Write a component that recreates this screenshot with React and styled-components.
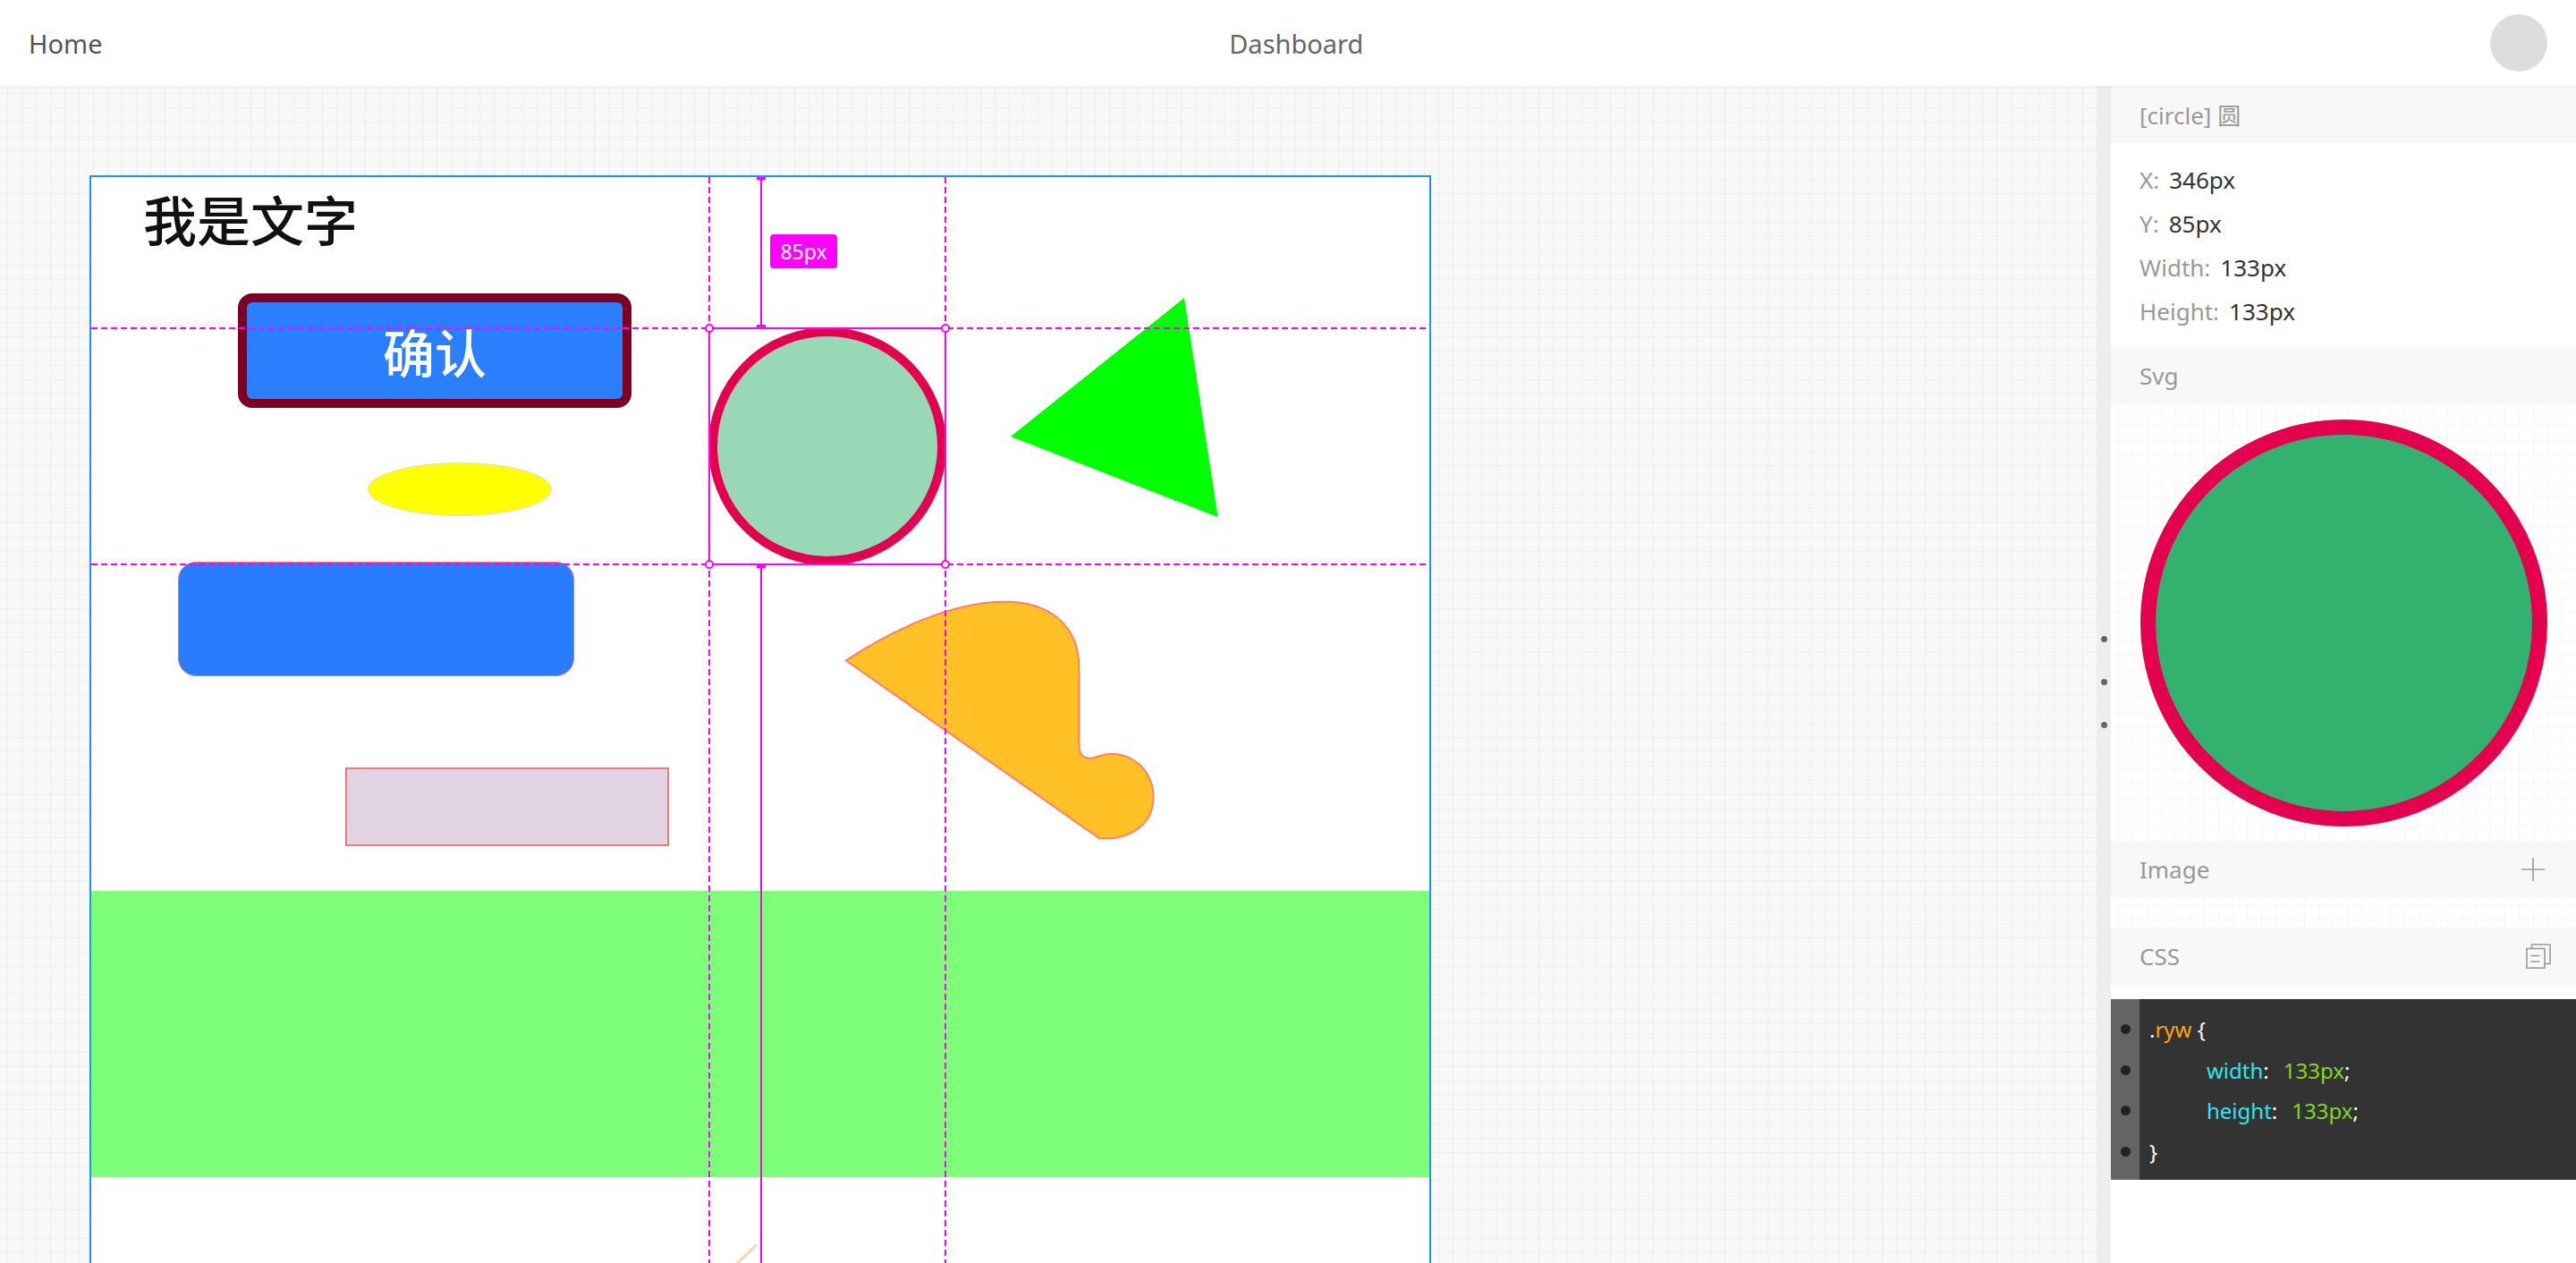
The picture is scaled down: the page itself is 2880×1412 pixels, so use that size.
import React from 'react';
import styled, { createGlobalStyle, css } from 'styled-components';

const GlobalStyle = createGlobalStyle`
  html, body {
    margin: 0;
    padding: 0;
  }

  body {
    font-family: "Noto Sans", "Noto Sans CJK SC", sans-serif;
    overflow: hidden;
  }
`;

const MAGENTA = '#ff00ff';

const gridBg = (base) => css`
  background-color: ${base};
  background-image:
    linear-gradient(to right, rgba(0, 0, 0, 0.03) 1px, transparent 1px),
    linear-gradient(to bottom, rgba(0, 0, 0, 0.03) 1px, transparent 1px);
  background-size: 16px 16px;
  background-position: 8px 8px;
`;

const Page = styled.div`
  width: 100vw;
  height: 100vh;
  display: flex;
  flex-direction: column;
  background: #fff;
`;

const TopBar = styled.header`
  height: 96px;
  flex: none;
  display: flex;
  align-items: center;
  justify-content: space-between;
  padding: 0 32px;
  background: #fff;
  box-shadow: 0 1px 4px rgba(0, 0, 0, 0.05);
  position: relative;
  z-index: 2;
`;

const NavText = styled.span`
  font-size: 29px;
  color: ${({ $muted }) => ($muted ? '#666' : '#555')};
`;

const Avatar = styled.div`
  width: 64px;
  height: 64px;
  border-radius: 50%;
  background: #ddd;
`;

const Workspace = styled.div`
  flex: 1;
  display: flex;
  min-height: 0;
`;

const Canvas = styled.main`
  flex: 1;
  overflow: hidden;
  padding: 100px 0 0 100px;
  ${gridBg('#f8f8f8')};
`;

const Artboard = styled.div`
  position: relative;
  box-sizing: border-box;
  width: 1500px;
  height: 1400px;
  background: #fff;
  border: 2px solid #1e90ff;
`;

/* shapes on the artboard */

const Title = styled.div`
  position: absolute;
  left: ${({ $x }) => $x}px;
  top: ${({ $y }) => $y}px;
  font-family: "Noto Sans CJK SC", sans-serif;
  font-size: 60px;
  line-height: 1;
  font-weight: 500;
  color: #111;
  white-space: nowrap;
`;

const ConfirmButton = styled.div`
  position: absolute;
  left: ${({ $x }) => $x}px;
  top: ${({ $y }) => $y}px;
  box-sizing: border-box;
  width: 440px;
  height: 128px;
  border: 10px solid #7d0024;
  border-radius: 16px;
  background: #2a7fff;
  color: #fff;
  display: flex;
  align-items: center;
  justify-content: center;
  font-family: "Noto Sans CJK SC", sans-serif;
  font-size: 58px;
  font-weight: 500;
`;

const Ellipse = styled.div`
  position: absolute;
  left: ${({ $x }) => $x}px;
  top: ${({ $y }) => $y}px;
  width: 206px;
  height: 60px;
  box-sizing: border-box;
  border-radius: 50%;
  background: #ffff00;
  border: 1px solid #ddd;
`;

const Block = styled.div`
  position: absolute;
  left: ${({ $x }) => $x}px;
  top: ${({ $y }) => $y}px;
  width: ${({ $w }) => $w}px;
  height: ${({ $h }) => $h}px;
  box-sizing: border-box;
  background: ${({ $fill }) => $fill};
  border: ${({ $line }) => $line};
  border-radius: ${({ $radius }) => $radius || 0}px;
`;

const Band = styled.div`
  position: absolute;
  left: 0;
  right: 0;
  top: ${({ $y }) => $y}px;
  height: 320px;
  background: #7dff7a;
`;

const ShapeSvg = styled.svg`
  position: absolute;
  left: ${({ $x }) => $x}px;
  top: ${({ $y }) => $y}px;
  overflow: visible;
  display: block;
`;

/* selection guides */

const GuideH = styled.div`
  position: absolute;
  left: 0;
  right: 0;
  top: ${({ $y }) => $y}px;
  height: 2px;
  background: repeating-linear-gradient(to right, ${MAGENTA} 0 7px, transparent 7px 11px);
`;

const GuideV = styled.div`
  position: absolute;
  top: 0;
  bottom: 0;
  left: ${({ $x }) => $x}px;
  width: 2px;
  background: repeating-linear-gradient(to bottom, ${MAGENTA} 0 7px, transparent 7px 11px);
`;

const MeasureLine = styled.div`
  position: absolute;
  left: ${({ $x }) => $x}px;
  top: ${({ $top }) => $top}px;
  height: ${({ $h }) => ($h ? `${$h}px` : 'auto')};
  bottom: ${({ $h }) => ($h ? 'auto' : '0')};
  width: 2px;
  background: ${MAGENTA};
`;

const Tick = styled.div`
  position: absolute;
  left: ${({ $x }) => $x - 4}px;
  top: ${({ $y }) => $y}px;
  width: 10px;
  height: 3px;
  background: ${MAGENTA};
`;

const SelectBox = styled.div`
  position: absolute;
  left: ${({ $x }) => $x}px;
  top: ${({ $y }) => $y}px;
  width: ${({ $size }) => $size}px;
  height: ${({ $size }) => $size}px;
  box-sizing: border-box;
  border: 2px solid ${MAGENTA};
`;

const Handle = styled.div`
  position: absolute;
  left: ${({ $x }) => $x - 5}px;
  top: ${({ $y }) => $y - 5}px;
  width: 10px;
  height: 10px;
  box-sizing: border-box;
  border-radius: 50%;
  border: 2px solid ${MAGENTA};
  background: #fff;
`;

const MeasureTag = styled.div`
  position: absolute;
  left: ${({ $x }) => $x}px;
  top: ${({ $y }) => $y}px;
  width: 75px;
  height: 38px;
  border-radius: 4px;
  background: ${MAGENTA};
  color: #fff;
  font-size: 23px;
  display: flex;
  align-items: center;
  justify-content: center;
`;

/* splitter */

const Splitter = styled.div`
  width: 16px;
  flex: none;
  background: #eee;
  display: flex;
  flex-direction: column;
  align-items: center;
  justify-content: center;
  gap: 41px;
  padding-top: 16px;
  box-sizing: border-box;
`;

const Grip = styled.span`
  width: 7px;
  height: 7px;
  border-radius: 50%;
  background: #666;
`;

/* inspector panel */

const Panel = styled.aside`
  width: 520px;
  flex: none;
  background: #fff;
  display: flex;
  flex-direction: column;
  overflow: hidden;
`;

const SectionHead = styled.div`
  height: 64px;
  flex: none;
  display: flex;
  align-items: center;
  justify-content: space-between;
  padding: 0 28px 0 32px;
  background: #f8f8f8;
  font-size: 26px;
  color: #999;
`;

const IconSlot = styled.span`
  display: flex;
  margin-right: ${({ $inset }) => $inset || 0}px;
`;

const InfoList = styled.div`
  padding: 16px 32px;
`;

const InfoRow = styled.div`
  height: 49px;
  display: flex;
  align-items: center;
  gap: 11px;
  font-size: 26px;
`;

const InfoLabel = styled.span`
  color: #999;
`;

const InfoValue = styled.span`
  color: #333;
`;

const Preview = styled.div`
  height: 488px;
  flex: none;
  display: flex;
  align-items: center;
  justify-content: center;
  ${gridBg('#fff')};
`;

const ImageArea = styled.div`
  height: 33px;
  flex: none;
  ${gridBg('#fff')};
`;

const CodeBlock = styled.div`
  margin-top: 16px;
  padding: 11px 0 9px;
  background: linear-gradient(to right, #646464 32px, #333 32px);
  font-size: 24px;
  color: #fff;
`;

const CodeLine = styled.div`
  height: 45.5px;
  display: flex;
  align-items: center;
`;

const GutterDot = styled.span`
  width: 32px;
  flex: none;
  display: flex;
  justify-content: center;

  &::before {
    content: '';
    width: 11px;
    height: 11px;
    border-radius: 50%;
    background: #222;
  }
`;

const CodeText = styled.span`
  padding-left: ${({ $indent }) => ($indent ? 75 : 11)}px;
  white-space: pre;
`;

const Token = styled.span`
  color: ${({ $kind }) =>
    ({ selector: '#ffa800', prop: '#2ee6f0', value: '#80d91c' }[$kind] || '#fff')};
  margin-left: ${({ $gap }) => $gap || 0}px;
`;

const CircleShape = ({ size, fillOpacity }) => (
  <svg width={size} height={size} viewBox="0 0 133 133">
    <circle cx="66.5" cy="66.5" r="64" fill="#33b16f" fillOpacity={fillOpacity} stroke="#e5004f" strokeWidth="5" />
  </svg>
);

const PlusIcon = () => (
  <svg width="26" height="26" viewBox="0 0 26 26">
    <path d="M13 0V26M0 13H26" stroke="#999" strokeWidth="1.6" fill="none" />
  </svg>
);

const CopyIcon = () => (
  <svg width="28" height="28" viewBox="0 0 28 28" fill="none" stroke="#999" strokeWidth="1.6">
    <path d="M6.5 5V1H27V22.5H21.5" />
    <rect x="1" y="5.5" width="20" height="21.7" />
    <path d="M5.5 13.5H15.5M5.5 20H15.5" />
  </svg>
);

const info = [
  ['X:', '346px'],
  ['Y:', '85px'],
  ['Width:', '133px'],
  ['Height:', '133px'],
];

const box = { x: 690, y: 168, size: 266 };

const App = () => (
  <Page>
    <GlobalStyle />
    <TopBar>
      <NavText>Home</NavText>
      <NavText $muted>Dashboard</NavText>
      <Avatar />
    </TopBar>

    <Workspace>
      <Canvas>
        <Artboard>
          <Title $x={58} $y={16}>我是文字</Title>
          <ConfirmButton $x={164} $y={130}>确认</ConfirmButton>
          <Ellipse $x={309} $y={319} />
          <Block $x={97} $y={430} $w={443} $h={128} $radius={20} $fill="#297cff" $line="1px solid #e87878" />
          <Block $x={284} $y={660} $w={362} $h={88} $fill="#e2d3e2" $line="2px solid #f47878" />

          <ShapeSvg $x={box.x} $y={box.y} width={box.size} height={box.size} viewBox="0 0 133 133">
            <circle cx="66.5" cy="66.5" r="64" fill="#33b16f" fillOpacity="0.5" stroke="#e5004f" strokeWidth="5" />
          </ShapeSvg>

          <ShapeSvg $x={1028} $y={135} width="232" height="245" viewBox="0 0 232 245">
            <polygon points="194,0 0,155 231.6,245" fill="#00ff00" />
          </ShapeSvg>

          <ShapeSvg $x={830} $y={460} width="380" height="300" viewBox="0 0 380 300">
            <path
              d="M13.7 80.3 C60 50 130 14 192.8 14.7 C240 15 274.4 40 274.4 88.7 L274.4 175.3
                 C274.4 190 285 192 295 188 C305 184 315 184 325 187 C350 195 360 220 357 240
                 C354 265 330 282 297 279.3 Z"
              fill="#ffc125"
              stroke="#ff7f6e"
              strokeWidth="2"
            />
          </ShapeSvg>

          <Band $y={798} />

          <ShapeSvg $x={718} $y={1190} width="30" height="30" viewBox="0 0 30 30">
            <path d="M0 28 L26 3.7" stroke="#fdd6a8" strokeWidth="3" />
          </ShapeSvg>

          <GuideH $y={box.y} />
          <GuideH $y={box.y + box.size - 2} />
          <GuideV $x={box.x} />
          <GuideV $x={box.x + box.size - 2} />
          <MeasureLine $x={748} $top={0} $h={box.y} />
          <MeasureLine $x={748} $top={box.y + box.size} />
          <Tick $x={748} $y={0} />
          <Tick $x={748} $y={box.y - 3} />
          <Tick $x={748} $y={box.y + box.size} />
          <SelectBox $x={box.x} $y={box.y} $size={box.size} />
          <Handle $x={box.x + 1} $y={box.y + 1} />
          <Handle $x={box.x + box.size - 1} $y={box.y + 1} />
          <Handle $x={box.x + 1} $y={box.y + box.size - 1} />
          <Handle $x={box.x + box.size - 1} $y={box.y + box.size - 1} />
          <MeasureTag $x={759} $y={64}>85px</MeasureTag>
        </Artboard>
      </Canvas>

      <Splitter>
        <Grip />
        <Grip />
        <Grip />
      </Splitter>

      <Panel>
        <SectionHead>[circle] 圆</SectionHead>
        <InfoList>
          {info.map(([label, value]) => (
            <InfoRow key={label}>
              <InfoLabel>{label}</InfoLabel>
              <InfoValue>{value}</InfoValue>
            </InfoRow>
          ))}
        </InfoList>

        <SectionHead>Svg</SectionHead>
        <Preview>
          <CircleShape size={455} fillOpacity={1} />
        </Preview>

        <SectionHead>
          Image
          <IconSlot $inset={7}>
            <PlusIcon />
          </IconSlot>
        </SectionHead>
        <ImageArea />

        <SectionHead>
          CSS
          <IconSlot>
            <CopyIcon />
          </IconSlot>
        </SectionHead>

        <CodeBlock>
          <CodeLine>
            <GutterDot />
            <CodeText>
              .<Token $kind="selector">ryw</Token> {'{'}
            </CodeText>
          </CodeLine>
          <CodeLine>
            <GutterDot />
            <CodeText $indent>
              <Token $kind="prop">width</Token>:<Token $kind="value" $gap={16}>133px</Token>;
            </CodeText>
          </CodeLine>
          <CodeLine>
            <GutterDot />
            <CodeText $indent>
              <Token $kind="prop">height</Token>:<Token $kind="value" $gap={16}>133px</Token>;
            </CodeText>
          </CodeLine>
          <CodeLine>
            <GutterDot />
            <CodeText>{'}'}</CodeText>
          </CodeLine>
        </CodeBlock>
      </Panel>
    </Workspace>
  </Page>
);

export default App;
